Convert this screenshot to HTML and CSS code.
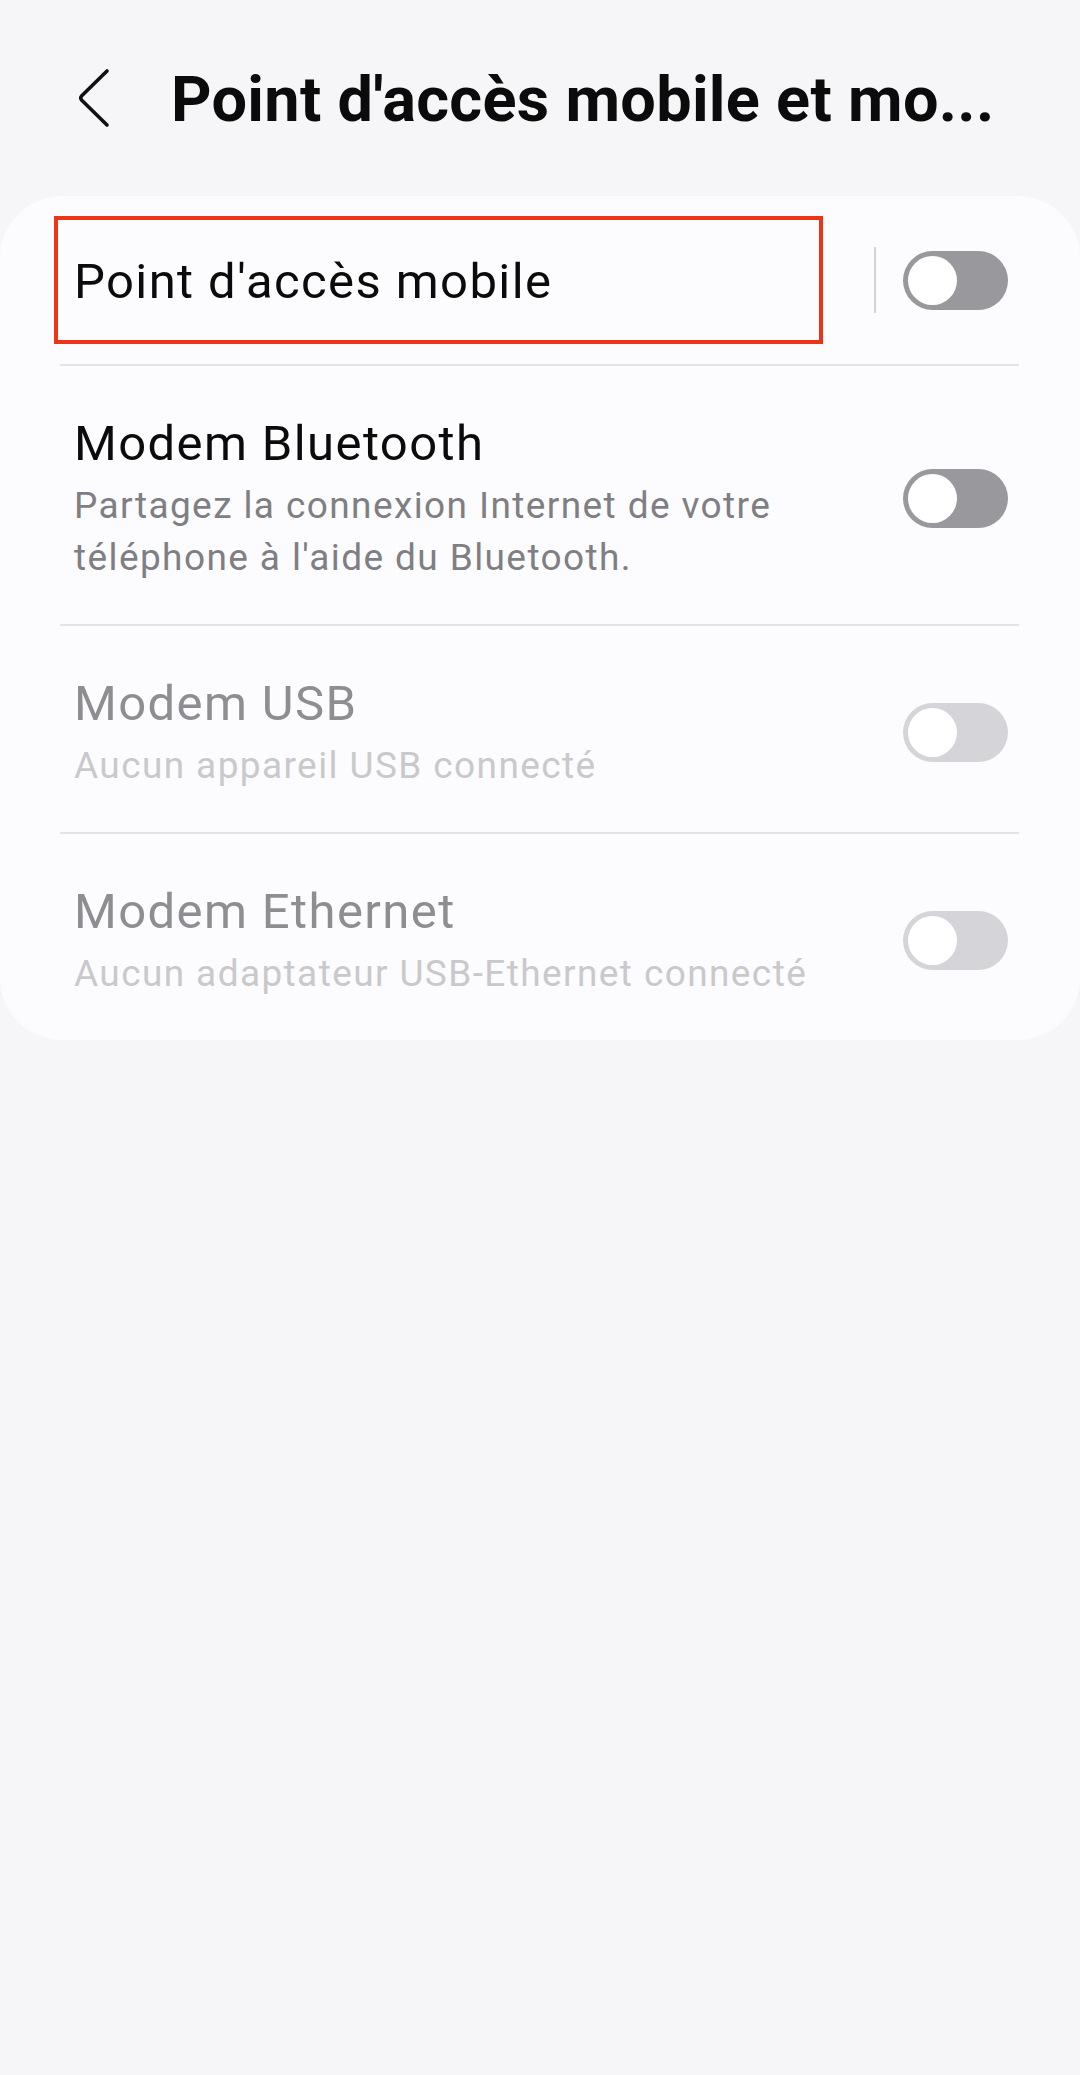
FILE: index.html
```html
<!DOCTYPE html>
<html lang="fr">
<head>
  <meta charset="UTF-8" />
  <meta name="viewport" content="width=device-width, initial-scale=1" />
  <title>Point d'accès mobile et modem</title>
  <link rel="stylesheet" href="styles.css">
</head>
<body>
  <header class="topbar">
    <button class="back" aria-label="Retour">
      <svg width="40" height="60" viewBox="0 0 40 60">
        <path d="M34 3 L8.5 28 Q7 30 8.5 32 L34 57" fill="none" stroke="#111" stroke-width="3.6" stroke-linecap="round" stroke-linejoin="round"/>
      </svg>
    </button>
    <h1 class="title">Point d'accès mobile et mo...</h1>
  </header>

  <main class="card">
    <!-- Hotspot -->
    <div class="row row-main">
      <div class="highlight">
        <span class="label">Point d'accès mobile</span>
      </div>
      <span class="vline"></span>
      <span class="switch"></span>
    </div>
    <div class="sep"></div>

    <div class="row">
      <div class="text">
        <div class="label">Modem Bluetooth</div>
        <div class="sub">Partagez la connexion Internet de votre<br>téléphone à l'aide du Bluetooth.</div>
      </div>
      <span class="switch"></span>
    </div>
    <div class="sep"></div>

    <div class="row disabled">
      <div class="text">
        <div class="label">Modem USB</div>
        <div class="sub">Aucun appareil USB connecté</div>
      </div>
      <span class="switch"></span>
    </div>
    <div class="sep"></div>

    <div class="row disabled">
      <div class="text">
        <div class="label">Modem Ethernet</div>
        <div class="sub">Aucun adaptateur USB-Ethernet connecté</div>
      </div>
      <span class="switch"></span>
    </div>
  </main>
</body>
</html>
```

FILE: styles.css
```css
:root {
  --page-bg: #f6f6f8;
  --card-bg: #fcfcfe;
  --text: #0b0b0b;
  --sub: #7f7f83;
  --muted: #8e8e92;
  --muted-sub: #c9c9cc;
  --line: #e3e3e6;
  --track: #98989d;
  --track-off: #d5d5d9;
  --mark: #ee3417;
}

body {
  margin: 0;
  background: var(--page-bg);
  font-family: Roboto, "Noto Sans", sans-serif;
  color: var(--text);
}

.topbar {
  height: 196px;
  display: flex;
  align-items: center;
  padding-left: 73px;
  box-sizing: border-box;
}

.back {
  background: none;
  border: none;
  padding: 0;
  width: 40px;
  height: 60px;
  display: block;
}

.back svg {
  display: block;
}

.title {
  margin: 2px 0 0 58px;
  font-size: 63px;
  font-weight: 700;
  letter-spacing: 0.3px;
  white-space: nowrap;
}

.card {
  background: var(--card-bg);
  border-radius: 62px;
}

.row {
  display: flex;
  align-items: center;
  padding: 46px 72px 40px 74px;
}

.row-main {
  height: 168px;
  box-sizing: border-box;
  padding: 0 72px 0 54px;
}

.highlight {
  width: 769px;
  height: 128px;
  box-sizing: border-box;
  border: 4px solid var(--mark);
  padding: 4px 0 0 16px;
  display: flex;
  align-items: center;
}

.vline {
  width: 2px;
  height: 66px;
  background: #d3d3d6;
  margin-left: 51px;
  margin-right: 27px;
}

.text {
  flex: 1;
}

.label {
  font-size: 49px;
  line-height: 64px;
  letter-spacing: 1.4px;
}

.sub {
  font-size: 37px;
  line-height: 52px;
  color: var(--sub);
  margin-top: 4px;
  letter-spacing: 1.4px;
}

.disabled .label {
  color: var(--muted);
}

.disabled .sub {
  color: var(--muted-sub);
}

.sep {
  height: 2px;
  background: var(--line);
  margin: 0 61px 0 60px;
}

.switch {
  position: relative;
  flex: none;
  width: 105px;
  height: 59px;
  border-radius: 30px;
  background: var(--track);
  margin-left: auto;
}

.switch::after {
  content: "";
  position: absolute;
  left: 5px;
  top: 5px;
  width: 49px;
  height: 49px;
  border-radius: 50%;
  background: #fff;
}

.disabled .switch {
  background: var(--track-off);
}
```
